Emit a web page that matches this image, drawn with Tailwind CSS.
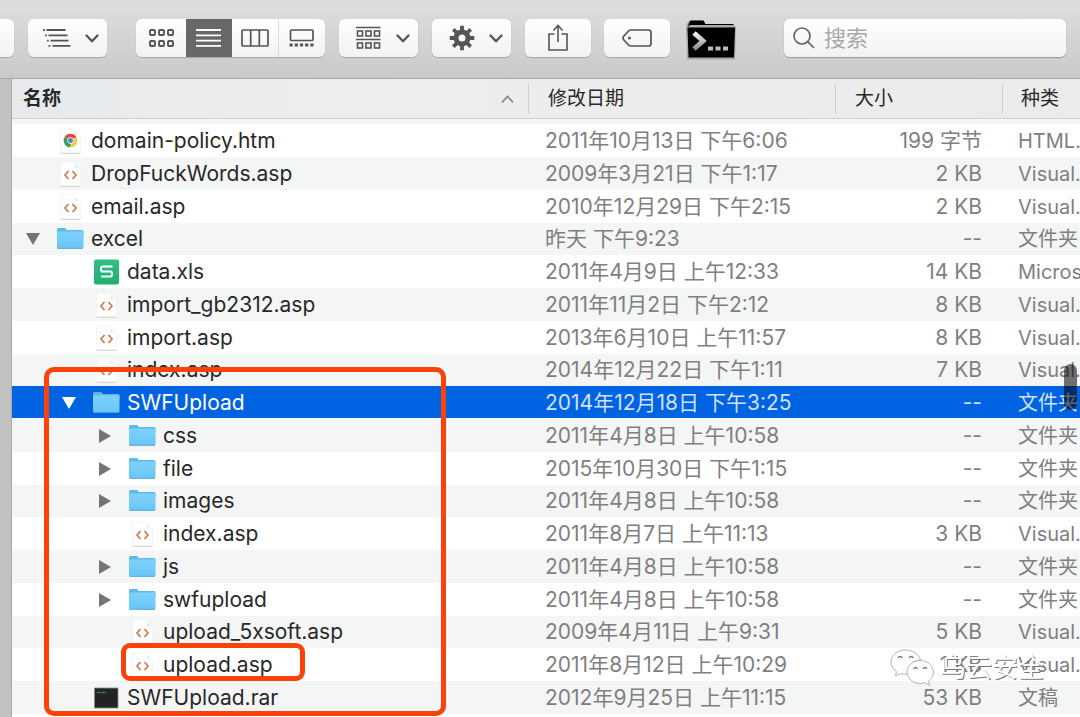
<!DOCTYPE html>
<html lang="zh-CN">
<head>
<meta charset="utf-8">
<title>Finder</title>
<script src="https://cdn.jsdelivr.net/npm/@tailwindcss/browser@4"></script>
</head>
<body class="bg-[#c1c1c1] font-['Inter','Noto_Sans_CJK_SC',sans-serif] text-[#282828]">
<svg class="absolute size-0" aria-hidden="true">
  <defs>
    <linearGradient id="folderFill" x1="0" y1="0" x2="0" y2="1"><stop offset="0" stop-color="#7fd2fb"/><stop offset="1" stop-color="#68c6f8"/></linearGradient>
    <linearGradient id="sheetFill" x1="0" y1="0" x2="0" y2="1"><stop offset="0" stop-color="#35bf86"/><stop offset="1" stop-color="#1cae70"/></linearGradient>
    <linearGradient id="promptFill" x1="0" y1="0" x2="0" y2="1"><stop offset="0" stop-color="#f4f4f4"/><stop offset="1" stop-color="#8c8c8c"/></linearGradient>
  </defs>
  <symbol id="chevron" viewBox="0 0 14 9"><path d="M1.500 1.500 7 7.300 12.500 1.500" fill="none" stroke="#555" stroke-width="2.300" stroke-linecap="round" stroke-linejoin="round"/></symbol>
  <symbol id="folder" viewBox="0 0 28 24">
    <path d="M1 2.500q0-1.500 1.500-1.500h6q1 0 1.500 1l.5 1h15.500q1.500 0 1.500 1.500v4H1z" fill="#5fb9ea"/>
    <path d="M1 5.500q0-1 1-1h24.500q1 0 1 1v14.500q0 1.500-1.500 1.500h-23.500q-1.500 0-1.500-1.500z" fill="url(#folderFill)"/>
    <path d="M1.500 21.300h25.500" stroke="#58a9d3" stroke-width="1"/>
  </symbol>
  <symbol id="page" viewBox="0 0 28 28">
    <path d="M4.500 2h13l7 7v17h-20z" fill="#fff" stroke="#efefef" stroke-width=".6"/>
    <path d="M16 2l8 8q-1.500-3-5-2.500 0-4-3-5.500z" fill="#dcdcdf"/>
    <path d="M4.500 26.300h20" stroke="#d2cfcd" stroke-width="1"/>
  </symbol>
  <symbol id="code" viewBox="0 0 28 28">
    <use href="#page"/>
    <path d="M12.500 11 9 15l3.500 4M16.500 11l3.500 4-3.500 4" fill="none" stroke="#cd7a4e" stroke-width="1.700"/>
  </symbol>
  <symbol id="chrome" viewBox="0 0 28 28">
    <use href="#page"/>
    <g transform="translate(14.500 13.500)">
      <path d="M0 0 -5.900-3.400A6.800 6.800 0 0 1 5.900-3.400z" fill="#dd4b3e"/>
      <path d="M0 0 5.900-3.400A6.800 6.800 0 0 1 0 6.800z" fill="#f9ca3e"/>
      <path d="M0 0 0 6.800A6.800 6.800 0 0 1-5.900-3.400z" fill="#2f9e57"/>
      <circle r="3.200" fill="#fff"/><circle r="2.500" fill="#4a80e8"/>
    </g>
  </symbol>
  <symbol id="sheet" viewBox="0 0 28 28">
    <rect x="2" y="1.500" width="25" height="25" rx="2" fill="url(#sheetFill)"/>
    <path d="M20.500 8.500H11q-2 0-2 1.800v1.400q0 1.800 2 1.800h7q2 0 2 1.800v1.400q0 1.800-2 1.800H9" fill="none" stroke="#fff" stroke-width="2"/>
  </symbol>
  <symbol id="archive" viewBox="0 0 28 28">
    <rect x="2.500" y="4" width="23.500" height="20" fill="#222423" stroke="#8b8d8c" stroke-width=".8"/>
    <path d="M5 8.500h9" stroke="#3f8f4a" stroke-width="1.300" stroke-dasharray="2 .5"/>
  </symbol>
</svg>

<div class="relative flex min-h-screen flex-col overflow-hidden">
  <header class="flex h-[79px] items-start border-b border-[#a8a8a8] bg-linear-to-b from-[#dedede] to-[#cacaca] pt-[19px] pr-[14px]">
    <button aria-label="前进" class="h-[38px] w-[14px] rounded-r-md bg-linear-to-b from-white to-[#f2f2f2] shadow-[0_1px_1px_#0003]"></button>
    <button aria-label="缩进列表" aria-haspopup="menu" class="ml-[14px] flex h-[38px] w-[79px] items-center justify-between rounded-md bg-linear-to-b from-white to-[#f2f2f2] pr-2 pl-[15px] shadow-[0_1px_1px_#0003]">
      <svg class="h-5 w-7" viewBox="0 0 28 20" stroke="#555" stroke-width="1.800"><path d="M3.500 2h19M5.500 7.300h19M7.500 12.600h18M9.500 17.800h18"/><path d="M0 2h1.800M2 7.300h1.800M4 12.600h1.800M5.500 17.800h1.800"/></svg>
      <svg class="h-[9px] w-[14px]"><use href="#chevron"/></svg>
    </button>
    <div role="group" aria-label="显示方式" class="ml-[29px] flex h-[38px] w-[189px] rounded-md bg-linear-to-b from-white to-[#f2f2f2] shadow-[0_1px_1px_#0003]">
      <button aria-label="图标" class="flex w-[50px] items-center justify-center">
        <svg class="h-5 w-[26px]" viewBox="0 0 26 20" fill="none" stroke="#555" stroke-width="1.900"><rect x="2" y="2" width="5" height="5" rx="1"/><rect x="11" y="2" width="5" height="5" rx="1"/><rect x="20" y="2" width="5" height="5" rx="1"/><rect x="2" y="13" width="5" height="5" rx="1"/><rect x="11" y="13" width="5" height="5" rx="1"/><rect x="20" y="13" width="5" height="5" rx="1"/></svg>
      </button>
      <button aria-label="列表" aria-pressed="true" class="flex w-[46px] items-center justify-center bg-[#686868]">
        <svg class="h-5 w-[26px]" viewBox="0 0 26 20" stroke="#fff" stroke-width="1.800"><path d="M0 2h25M0 7.300h25M0 12.600h25M0 17.800h25"/></svg>
      </button>
      <button aria-label="分栏" class="flex w-[47px] items-center justify-center border-r border-[#dcdcdc]">
        <svg class="h-[18px] w-7" viewBox="0 0 28 18" fill="none" stroke="#555" stroke-width="1.700"><rect x="1" y="1" width="26" height="16" rx="1"/><path d="M9.700 1v16M18.300 1v16"/></svg>
      </button>
      <button aria-label="画廊" class="flex w-[46px] items-center justify-center">
        <svg class="h-[18px] w-[26px]" viewBox="0 0 26 18" fill="none" stroke="#555"><rect x="1.500" y="1" width="22.500" height="10.500" rx="1" stroke-width="1.700"/><path d="M.500 16h24.500" stroke-width="3" stroke-dasharray="3.200 2"/></svg>
      </button>
    </div>
    <button aria-label="分组" aria-haspopup="menu" class="ml-[14px] flex h-[38px] w-[79px] items-center justify-between rounded-md bg-linear-to-b from-white to-[#f2f2f2] pr-2 pl-[17px] shadow-[0_1px_1px_#0003]">
      <svg class="h-6 w-[26px]" viewBox="0 0 26 24" fill="none" stroke="#555" stroke-width="1.600"><path d="M0 1.500h24.500M0 13.500h24.500"/><rect x="1.500" y="5" width="5" height="5"/><rect x="10" y="5" width="5" height="5"/><rect x="18.500" y="5" width="5" height="5"/><rect x="1.500" y="17" width="5" height="5"/><rect x="10" y="17" width="5" height="5"/><rect x="18.500" y="17" width="5" height="5"/></svg>
      <svg class="h-[9px] w-[14px]"><use href="#chevron"/></svg>
    </button>
    <button aria-label="操作" aria-haspopup="menu" class="ml-[14px] flex h-[38px] w-[79px] items-center justify-between rounded-md bg-linear-to-b from-white to-[#f2f2f2] pr-2 pl-[17px] shadow-[0_1px_1px_#0003]">
      <svg class="h-[26px] w-[26px]" viewBox="-13 -13 26 26" fill="none" stroke="#555"><circle r="6" stroke-width="5"/><path d="M0-12.300V-7M0 12.300V7M-12.300 0H-7M12.300 0H7M-8.700-8.700-5-5M8.700 8.700 5 5M-8.700 8.700-5 5M8.700-8.700 5-5" stroke-width="3.800"/></svg>
      <svg class="h-[9px] w-[14px]"><use href="#chevron"/></svg>
    </button>
    <button aria-label="共享" class="ml-[14px] flex h-[38px] w-[66px] items-center justify-center rounded-md bg-linear-to-b from-white to-[#f2f2f2] shadow-[0_1px_1px_#0003]">
      <svg class="h-7 w-5" viewBox="0 0 20 28" fill="none" stroke="#555" stroke-width="1.600"><path d="M6.500 10H1v16h18V10h-5.500M10 18V2M5.500 6.500 10 1.500l4.500 5"/></svg>
    </button>
    <button aria-label="标签" class="ml-[13px] flex h-[38px] w-[66px] items-center justify-center rounded-md bg-linear-to-b from-white to-[#f2f2f2] shadow-[0_1px_1px_#0003]">
      <svg class="h-[18px] w-[30px]" viewBox="0 0 30 18" fill="none" stroke="#555" stroke-width="1.700"><path d="M9 1h17.500q2.500 0 2.500 2.500v11q0 2.500-2.500 2.500H9q-1.500 0-2.500-1L1.500 10.500q-1-1.500 0-3L6.500 2Q7.500 1 9 1z"/><circle cx="7.500" cy="9" r="1.500" fill="#555" stroke="none"/></svg>
    </button>
    <button aria-label="终端" class="ml-[16px] h-[42px] w-[51px]">
      <svg class="h-[42px] w-[51px]" viewBox="0 0 51 42"><path d="M0 6 3 1.500h14l2 3.500h28l3 3-1 32.500H1z" fill="#aaa"/><path d="M2.500 8V5l2-3.500h13L19.500 5h28v1H4z" fill="#000"/><path d="M1.500 8.500H49l-1 30H2.500z" fill="#000"/><path d="M8 14l9 8-9 8" fill="none" stroke="url(#promptFill)" stroke-width="5"/><path d="M22 29.500h5M29.500 29.500h5M37 29.500h5" stroke="#bbb" stroke-width="4"/></svg>
    </button>
    <label class="ml-[47px] flex h-[38px] min-w-0 flex-1 items-center gap-[9px] rounded-md bg-linear-to-b from-white to-[#f2f2f2] pl-[9px] shadow-[0_1px_1px_#0004]">
      <svg class="h-[22px] w-[22px] shrink-0" viewBox="0 0 22 22" fill="none" stroke="#666" stroke-width="1.700"><circle cx="9" cy="9" r="8"/><path d="M14.700 14.700 21 21"/></svg>
      <input type="search" aria-label="搜索" placeholder="搜索" class="w-full min-w-0 bg-transparent text-[22px] leading-7 outline-none placeholder:text-[#a8a8a8]">
    </label>
  </header>

  <main class="ml-[11px] flex-1 border-l border-[#a9a9a9] bg-white">
    <table class="w-full table-fixed border-collapse">
      <colgroup><col><col class="w-[307px]"><col class="w-[167px]"><col class="w-[77px]"></colgroup>
      <thead>
        <tr class="h-[39px] border-b border-[#cfcfcf] bg-linear-to-r from-[#e6eaec] via-[#ededed] via-30% to-[#ebebeb] text-left text-[19px] leading-[30px]">
          <th scope="col" class="p-0 pt-[2px]"><div class="flex items-center justify-between border-r border-[#cfcfcf] pr-[14px] pl-[11px] font-bold">名称
            <svg class="h-2 w-[13px]" viewBox="0 0 13 8" fill="none" stroke="#8a8a8a" stroke-width="1.800"><path d="M1 7.300 6.500 1.500 12 7.300"/></svg></div></th>
          <th scope="col" class="p-0 pt-[2px]"><div class="border-r border-[#cfcfcf] pl-[19px] font-normal">修改日期</div></th>
          <th scope="col" class="p-0 pt-[2px]"><div class="border-r border-[#cfcfcf] pl-[19px] font-normal">大小</div></th>
          <th scope="col" class="p-0 pt-[2px]"><div class="overflow-hidden pl-[18px] font-normal whitespace-nowrap">种类</div></th>
        </tr>
        <tr class="h-[6px] bg-[#f4f5f5]"><td colspan="4" class="p-0"></td></tr>
      </thead>
      <tbody id="rows" class="text-[21px] leading-8 [&>tr]:h-[33px] [&>tr:nth-child(4n)]:h-8 [&>tr:nth-child(even)]:bg-[#f4f5f5]"></tbody>
    </table>
  </main>

  <div class="pointer-events-none absolute top-[364px] right-[3px] h-[46px] w-[13px] rounded-full bg-black/55"></div>
  <div class="pointer-events-none absolute top-[367px] left-[44px] h-[349px] w-[402px] rounded-[10px] border-[5px] border-[#fb4309]"></div>
  <div class="pointer-events-none absolute top-[643px] left-[121px] h-[38px] w-[184px] rounded-[9px] border-[5px] border-[#fb4309]"></div>
  <div class="pointer-events-none absolute top-[648px] right-[36px] flex items-center gap-[5px]">
    <svg class="h-[40px] w-[45px]" viewBox="0 0 45 40" fill="#fff" stroke="#b4b4b4" stroke-width="1">
      <path d="M15 2C7 2 1 7.500 1 14c0 4 2 7 5.500 9.500L5.500 28l5-2.500c2 .6 5 .8 7 .5C17 18 23 12 30.500 12 29 6 22.500 2 15 2z"/>
      <path d="M30 12.500c-7 0-13 5-13 11.500s6 11.500 13 11.500c1.500 0 3.500-.3 5-.8l4.500 2.800-1-4c3-2.500 5-5.500 5-9.500 0-6.500-6.500-11.500-13.500-11.500z"/>
      <path d="M8 10q2-3 4.500 0M19 10q2-3 4.500 0M23.500 21q2-3 4 0M33 21q2-3 4 0" fill="none" stroke="#777" stroke-width="1.300"/>
    </svg>
    <span class="text-[26px] leading-10 text-white [text-shadow:1px_1px_0_#777]">乌云安全</span>
  </div>
</div>

<script>
const files = [
  [0, 'chrome', '', 'domain-policy.htm', '2011年10月13日 下午6:06', '199 字节', 'HTML...'],
  [0, 'code', '', 'DropFuckWords.asp', '2009年3月21日 下午1:17', '2 KB', 'Visual...'],
  [0, 'code', '', 'email.asp', '2010年12月29日 下午2:15', '2 KB', 'Visual...'],
  [0, 'folder', 'open', 'excel', '昨天 下午9:23', '--', '文件夹'],
  [1, 'sheet', '', 'data.xls', '2011年4月9日 上午12:33', '14 KB', 'Microsoft'],
  [1, 'code', '', 'import_gb2312.asp', '2011年11月2日 下午2:12', '8 KB', 'Visual...'],
  [1, 'code', '', 'import.asp', '2013年6月10日 上午11:57', '8 KB', 'Visual...'],
  [1, 'code', '', 'index.asp', '2014年12月22日 下午1:11', '7 KB', 'Visual...'],
  [1, 'folder', 'open', 'SWFUpload', '2014年12月18日 下午3:25', '--', '文件夹'],
  [2, 'folder', 'shut', 'css', '2011年4月8日 上午10:58', '--', '文件夹'],
  [2, 'folder', 'shut', 'file', '2015年10月30日 下午1:15', '--', '文件夹'],
  [2, 'folder', 'shut', 'images', '2011年4月8日 上午10:58', '--', '文件夹'],
  [2, 'code', '', 'index.asp', '2011年8月7日 上午11:13', '3 KB', 'Visual...'],
  [2, 'folder', 'shut', 'js', '2011年4月8日 上午10:58', '--', '文件夹'],
  [2, 'folder', 'shut', 'swfupload', '2011年4月8日 上午10:58', '--', '文件夹'],
  [2, 'code', '', 'upload_5xsoft.asp', '2009年4月11日 上午9:31', '5 KB', 'Visual...'],
  [2, 'code', '', 'upload.asp', '2011年8月12日 上午10:29', '1 KB', 'Visual...'],
  [1, 'archive', '', 'SWFUpload.rar', '2012年9月25日 上午11:15', '53 KB', '文稿'],
];
const indent = ['pl-[13px]', 'pl-[49px]', 'pl-[85px]'];
const arrows = { open: 'M1 2h14L8 14z', shut: 'M2 1v14l12-7z' };
document.getElementById('rows').innerHTML = files.map(([level, icon, state, name, date, size, kind]) => {
  const selected = name === 'SWFUpload';
  const arrow = state
    ? `<button aria-label="${name}" aria-expanded="${state === 'open'}" class="size-4 shrink-0"><svg class="size-4" viewBox="0 0 16 16" fill="${selected ? '#fff' : '#757575'}"><path d="${arrows[state]}"/></svg></button>`
    : '<span class="size-4 shrink-0"></span>';
  const glyph = icon === 'folder' ? 'h-6 w-7 shrink-0' : 'size-7 shrink-0';
  return `<tr${selected ? ' aria-selected="true"' : ''} class="${selected ? 'bg-[#0063e1] text-white shadow-[inset_0_-1px_0_#fff]' : ''}">
    <td class="p-0"><div class="flex h-8 items-center ${indent[level]}">${arrow}<svg class="ml-[15px] ${glyph}"><use href="#${icon}"/></svg><span class="ml-[7px]">${name}</span></div></td>
    <td class="p-0 pl-4 whitespace-nowrap ${selected ? 'text-[#cfe1fb]' : 'text-[#808080]'}">${date}</td>
    <td class="p-0 pr-[21px] text-right whitespace-nowrap ${selected ? 'text-[#cfe1fb]' : 'text-[#808080]'}">${size}</td>
    <td class="overflow-hidden p-0 pl-[15px] text-[20px] whitespace-nowrap ${selected ? 'text-[#cfe1fb]' : 'text-[#808080]'}">${kind}</td>
  </tr>`;
}).join('');
</script>
</body>
</html>
